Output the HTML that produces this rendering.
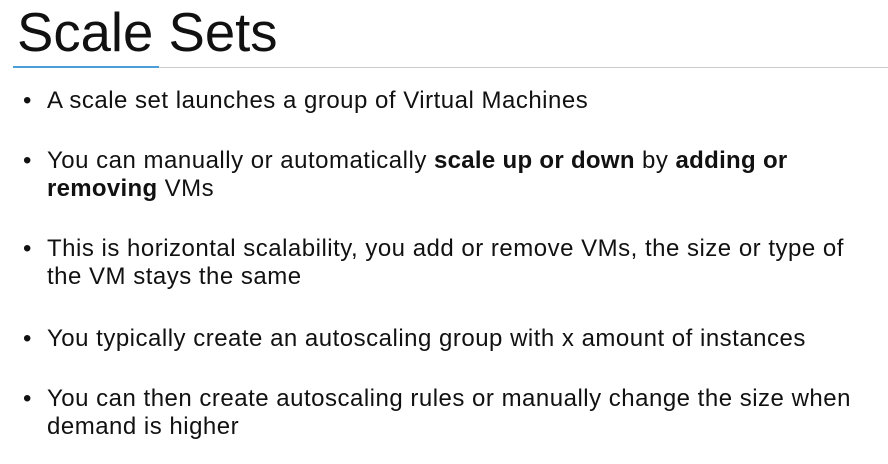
<!DOCTYPE html>
<html><head><style>
body{margin:0;width:888px;height:464px;background:#fff;overflow:hidden;font-family:"Liberation Sans",sans-serif;color:#111;position:relative}
h1{position:absolute;left:17px;top:1px;margin:0;font-weight:normal;font-size:54.5px;color:#111}
.line{position:absolute;left:13px;top:67px;width:875px;height:1px;background:#ccc}
.blue{position:absolute;left:13px;top:66px;width:146px;height:2px;background:#4a9fd8}
.it{position:absolute;left:47px;font-size:24px;letter-spacing:0.5px;line-height:28px;width:860px;white-space:nowrap}
.it:before{content:"•";position:absolute;left:-24px;letter-spacing:0}
b{font-weight:bold;letter-spacing:0.3px}
</style></head><body>
<h1>Scale Sets</h1>
<div class="line"></div><div class="blue"></div>
<div class="it" style="top:87px">A scale set launches a group of Virtual Machines</div>
<div class="it" style="top:147px">You can manually or automatically <b>scale up or down</b> by <b>adding or<br>removing</b> VMs</div>
<div class="it" style="top:235px">This is horizontal scalability, you add or remove VMs, the size or type of<br>the VM stays the same</div>
<div class="it" style="top:325px">You typically create an autoscaling group with x amount of instances</div>
<div class="it" style="top:385px">You can then create autoscaling rules or manually change the size when<br>demand is higher</div>
</body></html>
